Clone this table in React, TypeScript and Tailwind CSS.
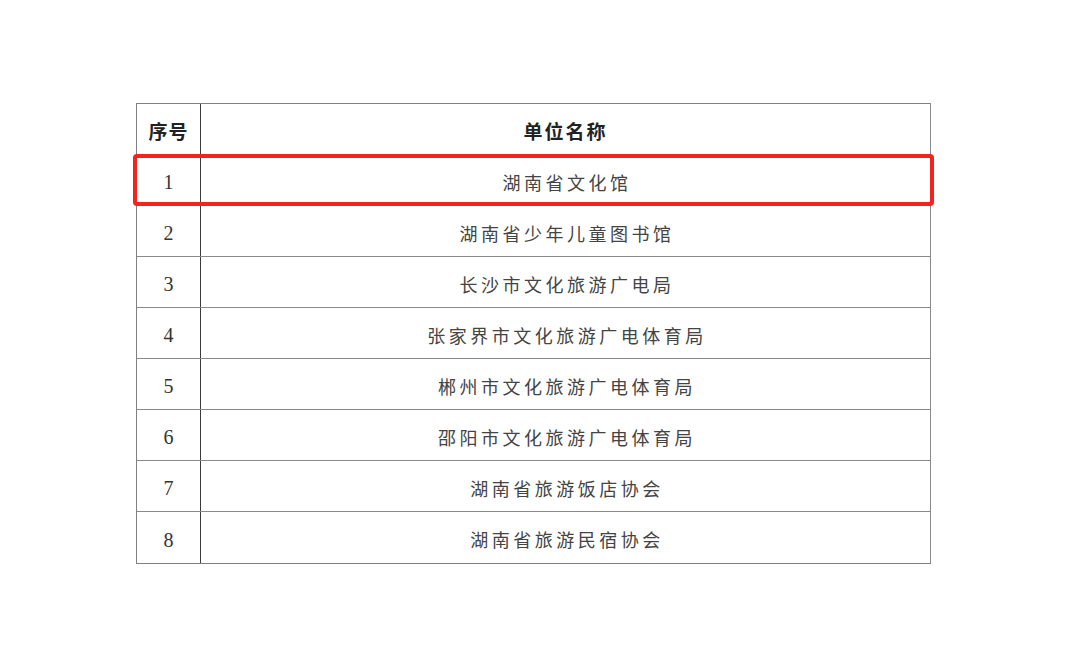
import React from "react";

const rows = [
  "湖南省文化馆",
  "湖南省少年儿童图书馆",
  "长沙市文化旅游广电局",
  "张家界市文化旅游广电体育局",
  "郴州市文化旅游广电体育局",
  "邵阳市文化旅游广电体育局",
  "湖南省旅游饭店协会",
  "湖南省旅游民宿协会",
];

const cjk = { fontFamily: '"Noto Sans CJK SC", "Noto Sans", sans-serif' };
const serif = { fontFamily: '"Liberation Serif", "DejaVu Serif", serif' };

export default function App() {
  return (
    <div className="w-[1080px] h-[649px] bg-white pl-[136px] pt-[103px]">
      <div className="w-[795px] border border-[#808080] border-r-[#8a8a8a]">
        <div className="flex h-[51px] border-b border-[#8a8a8a]">
          <div
            className="w-[64px] border-r border-[#3a3a3a] flex items-center justify-center text-[19px] font-bold text-[#222] tracking-[1px] pt-[4px]"
            style={cjk}
          >
            序号
          </div>
          <div
            className="flex-1 flex items-center justify-center text-[19px] font-bold text-[#222] tracking-[2px] pt-[4px]"
            style={cjk}
          >
            单位名称
          </div>
        </div>
        {rows.map((name, i) => (
          <div
            key={i}
            className={`relative flex h-[51px] ${i < rows.length - 1 ? "border-b border-[#8a8a8a]" : ""}`}
          >
            <div
              className="w-[64px] border-r border-[#3a3a3a] flex items-center justify-center text-[20px] text-[#333] pt-[4px]"
              style={serif}
            >
              {i + 1}
            </div>
            <div
              className="flex-1 flex items-center justify-center text-[18px] text-[#444] tracking-[3.5px] pl-[3px] pt-[4px]"
              style={cjk}
            >
              {name}
            </div>
            {i === 0 && (
              <div className="absolute left-[-4px] right-[-4px] top-[-1px] bottom-[-1px] border-4 border-[#f5231d] rounded-[4px] pointer-events-none" />
            )}
          </div>
        ))}
      </div>
    </div>
  );
}
